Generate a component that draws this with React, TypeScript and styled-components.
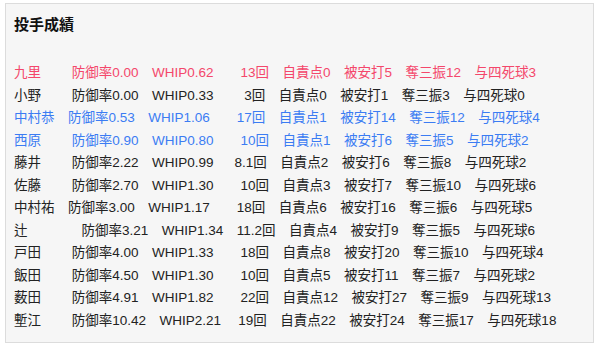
import React from "react";
import styled, { createGlobalStyle } from "styled-components";

const GlobalStyle = createGlobalStyle`
  html, body { margin: 0; padding: 0; background: #ffffff; }
  body { font-family: "Liberation Sans", "Noto Sans CJK JP", sans-serif; }
`;

type Tone = "red" | "blue" | "plain";

const toneColor: Record<Tone, string> = {
  red: "#f4476b",
  blue: "#3b7cf3",
  plain: "#222222",
};

const Panel = styled.section`
  margin: 3px 5px 0 5px;
  height: 329px;
  border: 1px solid #dcdcdc;
  background: #f6f6f6;
  padding: 9px 8px 0 8px;
  box-sizing: content-box;
  width: 571px;
`;

const Title = styled.h2`
  margin: 0;
  font-size: 15px;
  line-height: 23px;
  font-weight: 700;
  color: #111111;
`;

const List = styled.div`
  margin-top: 26px;
  display: flex;
  flex-direction: column;
`;

const Line = styled.p<{ $tone: Tone }>`
  margin: 0;
  font-size: 13.5px;
  line-height: 22.5px;
  white-space: pre;
  color: ${(p) => toneColor[p.$tone]};
`;

type Pitcher = {
  name: string;
  tone: Tone;
  pads: [string, string, string];
  era: string;
  whip: string;
  ip: string;
  er: number;
  h: number;
  k: number;
  bb: number;
};

const FW = "\u3000";
const SP = " ";

const pitchers: Pitcher[] = [
  { name: "九里", tone: "red", pads: [FW + FW + SP, FW, FW + FW], era: "0.00", whip: "0.62", ip: "13", er: 0, h: 5, k: 12, bb: 3 },
  { name: "小野", tone: "plain", pads: [FW + FW + SP, FW, FW + FW + SP], era: "0.00", whip: "0.33", ip: "3", er: 0, h: 1, k: 3, bb: 0 },
  { name: "中村恭", tone: "blue", pads: [FW, FW, FW + FW], era: "0.53", whip: "1.06", ip: "17", er: 1, h: 14, k: 12, bb: 4 },
  { name: "西原", tone: "blue", pads: [FW + FW + SP, FW, FW + FW], era: "0.90", whip: "0.80", ip: "10", er: 1, h: 6, k: 5, bb: 2 },
  { name: "藤井", tone: "plain", pads: [FW + FW + SP, FW, FW + SP + SP], era: "2.22", whip: "0.99", ip: "8.1", er: 2, h: 6, k: 8, bb: 2 },
  { name: "佐藤", tone: "plain", pads: [FW + FW + SP, FW, FW + FW], era: "2.70", whip: "1.30", ip: "10", er: 3, h: 7, k: 10, bb: 6 },
  { name: "中村祐", tone: "plain", pads: [FW, FW, FW + FW], era: "3.00", whip: "1.17", ip: "18", er: 6, h: 16, k: 6, bb: 5 },
  { name: "辻", tone: "plain", pads: [FW + FW + FW + FW, FW, FW], era: "3.21", whip: "1.34", ip: "11.2", er: 4, h: 9, k: 5, bb: 6 },
  { name: "戸田", tone: "plain", pads: [FW + FW + SP, FW, FW + FW], era: "4.00", whip: "1.33", ip: "18", er: 8, h: 20, k: 10, bb: 4 },
  { name: "飯田", tone: "plain", pads: [FW + FW + SP, FW, FW + FW], era: "4.50", whip: "1.30", ip: "10", er: 5, h: 11, k: 7, bb: 2 },
  { name: "薮田", tone: "plain", pads: [FW + FW + SP, FW, FW + FW], era: "4.91", whip: "1.82", ip: "22", er: 12, h: 27, k: 9, bb: 13 },
  { name: "塹江", tone: "plain", pads: [FW + FW + SP, FW, FW + SP], era: "10.42", whip: "2.21", ip: "19", er: 22, h: 24, k: 17, bb: 18 },
];

const lineText = (p: Pitcher) =>
  `${p.name}${p.pads[0]}防御率${p.era}${p.pads[1]}WHIP${p.whip}${p.pads[2]}${p.ip}回` +
  `${FW}自責点${p.er}${FW}被安打${p.h}${FW}奪三振${p.k}${FW}与四死球${p.bb}`;

export default function App() {
  return (
    <>
      <GlobalStyle />
      <Panel>
        <Title>投手成績</Title>
        <List>
          {pitchers.map((p) => (
            <Line key={p.name} $tone={p.tone}>
              {lineText(p)}
            </Line>
          ))}
        </List>
      </Panel>
    </>
  );
}
